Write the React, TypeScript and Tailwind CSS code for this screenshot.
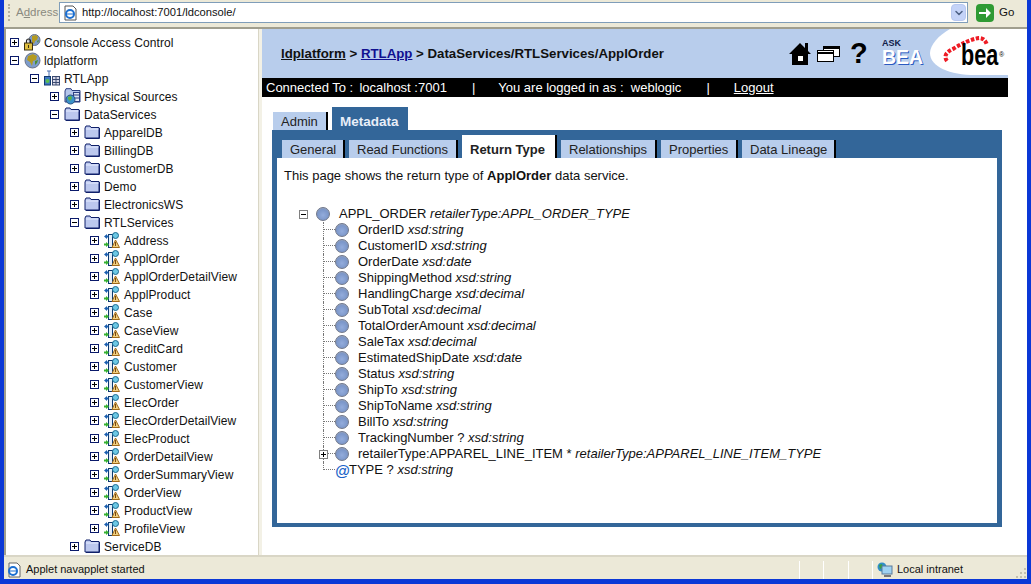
import React from 'react';
import { ChevronDown } from 'lucide-react';

const FONT = { fontFamily: '"Liberation Sans", Arial, sans-serif' };

const PlusBox: React.FC<{ open?: boolean; gray?: boolean }> = ({ open, gray }) => (
    <svg width="9" height="9" viewBox="0 0 9 9" className="shrink-0" aria-hidden="true">
        <rect x="0.5" y="0.5" width="8" height="8" fill="#fff" stroke={gray ? '#808080' : '#0a1a6a'} />
        <path d={open ? 'M2 4.5h5' : 'M2 4.5h5M4.5 2v5'} stroke="#000" strokeWidth="1" />
    </svg>
);

const Folder = () => (
    <svg width="16" height="14" viewBox="0 0 16 14" className="shrink-0" aria-hidden="true">
        <path d="M1 3 2 1h4l1 1.5h8V13H1z" fill="#bcc8ee" stroke="#10206a" />
        <path d="M2 4h12.5" stroke="#e6ecff" />
        <path d="M15.5 3v10.5H2" stroke="#10206a" fill="none" />
    </svg>
);

const ViewIcon = () => (
    <svg width="16" height="16" viewBox="0 0 16 16" className="shrink-0" aria-hidden="true">
        <rect x="4.5" y="2.5" width="4" height="13" fill="#e4eef8" stroke="#0d3a70" />
        <path d="M0 4.5 3 2v1.5h1.500v2H3V7z" fill="#1b5fb0" />
        <path d="M5 12.500 2 10v1.500H0v2h2V15z" fill="#35b030" />
        <circle cx="11.500" cy="3.500" r="3" fill="#6cc8e4" stroke="#1a6a90" />
        <path d="M8 15.500 11.500 8l4 7.500z" fill="#f0d080" stroke="#a06a18" />
        <path d="M11.500 10v4" stroke="#7a4a10" />
    </svg>
);

const GlobeIcon: React.FC<{ lock?: boolean }> = ({ lock }) => (
    <svg width="17" height="17" viewBox="0 0 17 17" className="shrink-0" aria-hidden="true">
        <circle cx={lock ? 10.5 : 8.5} cy={lock ? 6 : 8.5} r={lock ? 5.5 : 7.5} fill="#7d9ccc" stroke="#6a7284" />
        <path d={lock ? 'M8 2l4-1 2 2-1 3-2 1-1 3-2-2z' : 'M4 4l5-2 4 2-1 4-3 1-1 5-2-4-3-2z'} fill="#b49a20" />
        <path d={lock ? 'M13 7l2-1-1 3z' : 'M11 9l3-1-1 3-2 2z'} fill="#4f8f30" />
        {lock && (
            <>
                <path d="M2.500 9V7a2 2 0 0 1 4 0v2" fill="none" stroke="#222" strokeWidth="1.200" />
                <rect x="0.500" y="9" width="8" height="7" fill="#e0c040" stroke="#3b3010" />
                <path d="M4.500 11v3" stroke="#3b3010" />
            </>
        )}
    </svg>
);

const AppIcon = () => (
    <svg width="16" height="16" viewBox="0 0 16 16" className="shrink-0" aria-hidden="true">
        <rect x="0.500" y="6.500" width="6" height="8.500" fill="#3f79c0" stroke="#123a70" />
        <circle cx="3.500" cy="11" r="2" fill="#5bbf4f" />
        <rect x="8.500" y="6.500" width="7" height="8.500" fill="#d8d8e8" stroke="#3a4a70" />
        <path d="M8.500 9.500h7M8.500 12.500h7M12 6.500V15" stroke="#3a4a70" />
        <path d="M5 1v5M3 1h4" stroke="#4a6fb0" />
    </svg>
);

const SourcesIcon = () => (
    <svg width="17" height="17" viewBox="0 0 17 17" className="shrink-0" aria-hidden="true">
        <path d="M1 3 2 .7h5l1 1.800h8V14H1z" fill="#b5c6ea" stroke="#2b3d80" />
        <rect x="9.500" y="4.500" width="6" height="9" fill="#dfe6f6" stroke="#2b3d80" />
        <path d="M10 7h5M10 10h5" stroke="#2b3d80" />
        <circle cx="6.500" cy="11.500" r="4.500" fill="#3a90c8" stroke="#2a5080" />
        <path d="M4 9l3-1 1 2-2 3-2-2z" fill="#5fb040" />
    </svg>
);

type NavRow = { label: string; depth: string; icon: React.ReactNode; open?: boolean };

const VIEW_NAMES = [
    'Address', 'ApplOrder', 'ApplOrderDetailView', 'ApplProduct', 'Case', 'CaseView', 'CreditCard',
    'Customer', 'CustomerView', 'ElecOrder', 'ElecOrderDetailView', 'ElecProduct', 'OrderDetailView',
    'OrderSummaryView', 'OrderView', 'ProductView', 'ProfileView',
];

const NAV_ROWS: NavRow[] = [
    { label: 'Console Access Control', depth: 'pl-[4px]', icon: <GlobeIcon lock /> },
    { label: 'ldplatform', depth: 'pl-[4px]', icon: <GlobeIcon />, open: true },
    { label: 'RTLApp', depth: 'pl-[24px]', icon: <AppIcon />, open: true },
    { label: 'Physical Sources', depth: 'pl-[44px]', icon: <SourcesIcon /> },
    { label: 'DataServices', depth: 'pl-[44px]', icon: <Folder />, open: true },
    { label: 'ApparelDB', depth: 'pl-[64px]', icon: <Folder /> },
    { label: 'BillingDB', depth: 'pl-[64px]', icon: <Folder /> },
    { label: 'CustomerDB', depth: 'pl-[64px]', icon: <Folder /> },
    { label: 'Demo', depth: 'pl-[64px]', icon: <Folder /> },
    { label: 'ElectronicsWS', depth: 'pl-[64px]', icon: <Folder /> },
    { label: 'RTLServices', depth: 'pl-[64px]', icon: <Folder />, open: true },
    ...VIEW_NAMES.map(label => ({ label, depth: 'pl-[84px]', icon: <ViewIcon /> })),
    { label: 'ServiceDB', depth: 'pl-[64px]', icon: <Folder /> },
];

const FIELDS: [string, string][] = [
    ['OrderID', 'xsd:string'],
    ['CustomerID', 'xsd:string'],
    ['OrderDate', 'xsd:date'],
    ['ShippingMethod', 'xsd:string'],
    ['HandlingCharge', 'xsd:decimal'],
    ['SubTotal', 'xsd:decimal'],
    ['TotalOrderAmount', 'xsd:decimal'],
    ['SaleTax', 'xsd:decimal'],
    ['EstimatedShipDate', 'xsd:date'],
    ['Status', 'xsd:string'],
    ['ShipTo', 'xsd:string'],
    ['ShipToName', 'xsd:string'],
    ['BillTo', 'xsd:string'],
    ['TrackingNumber ?', 'xsd:string'],
];

const Ball = () => (
    <span className="h-[14px] w-[14px] shrink-0 rounded-full border border-[#6f7688] bg-[radial-gradient(circle_at_50%_60%,#93acdc_0%,#7b96c8_60%,#a9b0bf_90%,#c4c8d2_100%)]" />
);

// dotted tree guide; children (the +/- box) sit on top of the line
const Connector: React.FC<{ last?: boolean; children?: React.ReactNode }> = ({ last, children }) => (
    <span className="relative h-4 w-[12px] shrink-0">
        <span className={`block ${last ? 'h-2' : 'h-4'} w-[12px] border-l border-dotted border-[#777]`}>
            <span className="block h-2 border-b border-dotted border-[#777]" />
        </span>
        {children && <span className="absolute top-[4px] -left-[4px] flex">{children}</span>}
    </span>
);

const SUB_TABS = [
    { label: 'General', width: 'w-[63px]' },
    { label: 'Read Functions', width: 'w-[109px]' },
    { label: 'Return Type', width: 'w-[95px]', active: true },
    { label: 'Relationships', width: 'w-[96px]' },
    { label: 'Properties', width: 'w-[77px]' },
    { label: 'Data Lineage', width: 'w-[94px]' },
];

const Toolbar = () => (
    <div className="flex h-[29px] shrink-0 items-center border-b-2 border-[#a09e8e] bg-[#ece9d8] pb-[2px]">
        <span className="ml-[4px] h-[17px] w-[3px] border-l-2 border-dotted border-[#b5b29f]" />
        <span className="ml-[5px] w-[43px] text-[11.5px] text-[#8a8a80]">
            A<span className="underline">d</span>dress
        </span>
        <div className="flex h-[21px] w-[909px] items-center border border-[#7f9db9] bg-white">
            <svg width="16" height="16" viewBox="0 0 16 16" className="ml-[3px]" aria-hidden="true">
                <path d="M2 1h8l3 3v11H2z" fill="#fff" stroke="#555" />
                <circle cx="7" cy="9" r="4" fill="none" stroke="#1c6fd0" strokeWidth="2" />
                <path d="M3 9h8" stroke="#1c6fd0" />
            </svg>
            <span className="ml-[3px] flex-1 text-[11.2px] text-[#111]">http://localhost:7001/ldconsole/</span>
            <span className="mr-[1px] flex h-[17px] w-[15px] items-center justify-center rounded-sm border border-[#b8c8f0] bg-[#c4d3f8]">
                <ChevronDown className="h-3 w-3 text-[#4d6185]" strokeWidth={3} />
            </span>
        </div>
        <span className="ml-[8px] flex h-[18px] w-[18px] items-center justify-center rounded-sm bg-[#2f9a33]">
            <svg width="14" height="14" viewBox="0 0 14 14" aria-hidden="true">
                <path d="M1 6h7V2l5 5-5 5V8H1z" fill="#fff" />
            </svg>
        </span>
        <span className="ml-[5px] text-[11.5px] text-[#111]">Go</span>
    </div>
);

const Sidebar = () => (
    <div className="w-[254px] shrink-0 overflow-hidden border-l-2 border-[#a09e8e] bg-white pt-[4px]">
        {NAV_ROWS.map(row => (
            <div key={row.label} className={`flex h-[18px] items-center ${row.depth}`}>
                <PlusBox open={row.open} />
                <span className="ml-[5px] flex w-[17px]">{row.icon}</span>
                <span className="mt-[2px] ml-[3px] text-[12px] tracking-[0.1px] whitespace-nowrap text-[#111]">{row.label}</span>
            </div>
        ))}
    </div>
);

const BeaLogo = () => (
    <span className="relative ml-[2px] h-[49px] w-[83px] shrink-0">
        <svg width="83" height="49" viewBox="0 0 83 49" className="absolute top-0 left-0" aria-hidden="true">
            <path d="M25 0C14 6 5 16 5 24c0 14 20 22 45 22h33V0z" fill="#fff" />
            <path d="M22 32Q17 25 28 20 42 11 54 9q6 0 8 7" fill="none" stroke="#ee1c25" strokeWidth="4" strokeDasharray="3.500 1.600" />
        </svg>
        <span className="absolute top-[11px] left-[36px] origin-left scale-x-[0.72] text-[30px] leading-[30px] font-bold text-black">bea</span>
        <span className="absolute top-[22px] left-[74px] text-[7px] leading-none text-black">®</span>
    </span>
);

const Header = () => (
    <div className="flex h-[49px] items-center bg-[#b8cdec] pl-[19px]">
        <span className="text-[13.25px] font-bold whitespace-nowrap text-[#111]">
            <span className="underline">ldplatform</span> &gt; <span className="text-[#101090] underline">RTLApp</span> &gt; DataServices/RTLServices/ApplOrder
        </span>
        <svg width="22" height="23" viewBox="0 0 22 23" className="ml-auto" aria-hidden="true">
            <path d="M0 12 11 1l5 5V1h3v8l3 3h-3v11H3V12z" fill="#000" />
            <rect x="9" y="14" width="5" height="5" fill="#fff" />
        </svg>
        <svg width="23" height="16" viewBox="0 0 23 16" className="ml-[6px]" aria-hidden="true">
            <rect x="6.500" y="0.500" width="16" height="10" fill="#fff" stroke="#000" />
            <rect x="0.500" y="4.500" width="16" height="11" fill="#fff" stroke="#000" />
            <path d="M1 7h15M7 2h15" stroke="#000" strokeWidth="2" />
        </svg>
        <span className="ml-[10px] w-[16px] text-[29px] leading-none font-bold text-black">?</span>
        <span className="ml-[16px] flex w-[41px] flex-col leading-none">
            <span className="text-[9px] font-bold text-[#10204a]">ASK</span>
            <span className="text-[19.5px] font-bold text-white [text-shadow:1px_1px_0_#2a5ac0]">BEA</span>
        </span>
        <BeaLogo />
    </div>
);

const ConnectBar = () => (
    <div className="flex h-[19px] items-center bg-black pl-1 text-[13px] whitespace-nowrap text-white">
        <span>Connected To :&nbsp;&thinsp;localhost :7001</span>
        <span className="ml-[25px]">|</span>
        <span className="ml-[23px]">You are logged in as :&nbsp; weblogic</span>
        <span className="ml-[25px]">|</span>
        <span className="ml-[24px] underline">Logout</span>
    </div>
);

const ReturnTree = () => (
    <div className="mt-[20px] ml-[15px] text-[13px] text-[#111]">
        <div className="flex h-4 items-center">
            <PlusBox open gray />
            <span className="ml-[8px] flex"><Ball /></span>
            <span className="ml-[9px] whitespace-nowrap">
                APPL_ORDER <i>retailerType:APPL_ORDER_TYPE</i>
            </span>
        </div>
        <div className="ml-[24px]">
            {FIELDS.map(([name, type]) => (
                <div key={name} className="flex h-4 items-center">
                    <Connector />
                    <Ball />
                    <span className="ml-[9px] whitespace-nowrap">
                        {name} <i>{type}</i>
                    </span>
                </div>
            ))}
            <div className="flex h-4 items-center">
                <Connector>
                    <PlusBox gray />
                </Connector>
                <Ball />
                <span className="ml-[9px] whitespace-nowrap">
                    retailerType:APPAREL_LINE_ITEM * <i>retailerType:APPAREL_LINE_ITEM_TYPE</i>
                </span>
            </div>
            <div className="flex h-4 items-center">
                <Connector last />
                <span className="w-[14px] text-[15px] leading-none font-bold text-[#1a62c8] italic">@</span>
                <span className="whitespace-nowrap">
                    TYPE ? <i>xsd:string</i>
                </span>
            </div>
        </div>
    </div>
);

const MainPane = () => (
    <div className="min-w-0 flex-1 bg-white">
        <div className="w-[746px]">
            <Header />
            <ConnectBar />
        </div>
        <div className="mt-[10px] ml-[11px] flex gap-[4px]">
            <span className="mt-[5px] flex h-[18px] w-[55px] items-center border-r-2 border-black bg-[#b8cdec] pt-[2px] pl-2 text-[13px] text-[#222]">Admin</span>
            <span className="flex h-[23px] w-[76px] items-center bg-[#336699] pt-[7px] pl-2 text-[13.5px] font-bold text-[#e8eef8]">Metadata</span>
        </div>
        <div className="ml-[10px] h-[397px] w-[730px] bg-[#336699] px-[5px] pt-[5px] pb-[4px]">
            <div className="flex gap-[4px] pl-[5px]">
                {SUB_TABS.map(tab => (
                    <span
                        key={tab.label}
                        className={`flex items-center border-r-2 border-black pl-2 text-[13px] whitespace-nowrap text-[#222] ${tab.width} ${
                            tab.active ? 'h-[23px] bg-white pt-[7px] font-bold' : 'mt-[5px] h-[18px] bg-[#b8cdec] pt-[2px]'
                        }`}
                    >
                        {tab.label}
                    </span>
                ))}
            </div>
            <div className="h-[365px] bg-white pt-[8px] pl-[7px] text-[13px] leading-5 text-[#111]">
                <p>
                    This page shows the return type of <b>ApplOrder</b> data service.
                </p>
                <ReturnTree />
            </div>
        </div>
    </div>
);

const StatusBar = () => (
    <div className="flex h-[24px] shrink-0 items-center border-t-2 border-[#d9d6c6] bg-[#ece9d8] pt-[3px] text-[11px] text-[#111]">
        <svg width="16" height="16" viewBox="0 0 16 16" className="ml-[2px]" aria-hidden="true">
            <path d="M3 1h8l3 3v11H3z" fill="#fff" stroke="#666" />
            <circle cx="7" cy="9" r="4" fill="none" stroke="#1c6fd0" strokeWidth="2" />
            <path d="M3 9h8" stroke="#1c6fd0" />
        </svg>
        <span className="ml-[4px] w-[773px]">Applet navapplet started</span>
        <span className="h-[18px] w-6 border-l border-white" />
        <span className="h-[18px] w-[25px] border-l border-white" />
        <span className="h-[18px] w-6 border-l border-white" />
        <span className="h-[18px] w-[5px] border-l border-white" />
        <svg width="16" height="16" viewBox="0 0 16 16" aria-hidden="true">
            <circle cx="5" cy="5" r="4.500" fill="#2f8fc8" />
            <path d="M2 3l3-1 1 3-3 2z" fill="#3aa040" />
            <rect x="5" y="4" width="10" height="8" fill="#9fd2f2" stroke="#5a7a9a" />
            <path d="M7 14h7" stroke="#777" strokeWidth="2" />
        </svg>
        <span className="ml-[4px]">Local intranet</span>
        <svg width="12" height="12" viewBox="0 0 12 12" className="mt-auto ml-auto" aria-hidden="true">
            <path d="M9 1h2v2H9zM5 5h2v2H5zM9 5h2v2H9zM1 9h2v2H1zM5 9h2v2H5zM9 9h2v2H9z" fill="#c4c1ae" />
        </svg>
    </div>
);

export default function App() {
    return (
        <div className="flex h-[584px] w-[1031px] flex-col overflow-hidden border-x-4 border-b-[5px] border-x-[#0b38d6] border-b-[#0b38d6] bg-white" style={FONT}>
            <Toolbar />
            <div className="flex min-h-0 flex-1 bg-white">
                <Sidebar />
                <div className="w-[4px] shrink-0 border-l border-[#d9d6c6] bg-[#f3f1e6]" />
                <MainPane />
            </div>
            <StatusBar />
        </div>
    );
}
